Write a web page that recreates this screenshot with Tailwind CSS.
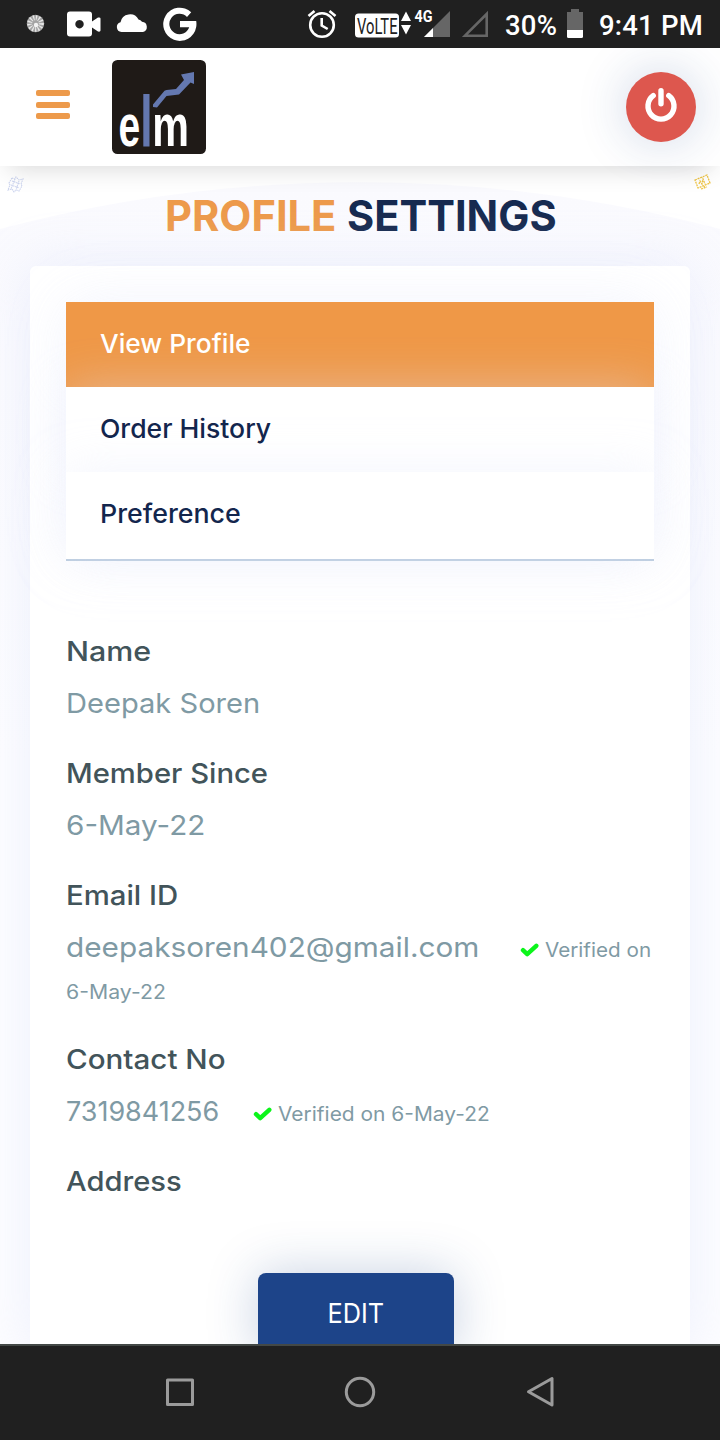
<!DOCTYPE html>
<html lang="en">
<head>
<meta charset="utf-8">
<meta name="viewport" content="width=device-width, initial-scale=1">
<title>Profile Settings</title>
<script src="https://cdn.jsdelivr.net/npm/@tailwindcss/browser@4"></script>
</head>
<body class="w-[720px] h-[1440px] overflow-hidden bg-white font-['Inter',sans-serif]">
<div class="relative flex h-[1440px] w-[720px] flex-col overflow-hidden">

  <!-- Status bar -->
  <div class="relative z-20 flex h-12 shrink-0 items-center bg-[#202020] font-['Roboto',sans-serif] text-white">
    <svg class="h-12 w-[500px] shrink-0" viewBox="0 0 500 48" fill="#fff">
      <circle cx="35.5" cy="23.5" r="8.7" fill="#a3a3a3"/>
      <circle cx="35.5" cy="23.5" r="5.8" fill="none" stroke="#e8e8e8" stroke-width="5" stroke-dasharray="1.2 1.5"/>
      <circle cx="36" cy="25" r="2.2" fill="#f2f2f2"/>
      <path fill-rule="evenodd" d="M70 11.500h19q3 0 3 3v7l6-4q2.500-.500 2.500 1v12q0 1.500-2.500 1l-6-4v6q0 3-3 3H70q-3 0-3-3v-19q0-3 3-3zM79.500 20a4.200 4.200 0 1 0 .01 0z"/>
      <path d="M121.500 32a5 5 0 0 1-1-9.800A9.600 9.600 0 0 1 138.500 19.500a6.200 6.200 0 0 1 3.500 2.300A5.200 5.200 0 0 1 143 32z"/>
      <path d="M180 21h16.200q.500 3 0 6A16.600 16.600 0 1 1 191.200 12.200L187 17A10.200 10.200 0 1 0 189.200 27.300H180z"/>
      <g fill="none" stroke="#fff" stroke-width="2.600">
        <circle cx="322" cy="25" r="11.800"/><path d="M321.700 18v7.500l6 3.500M308.500 16l6-5M335.500 16l-6-5"/>
      </g>
      <rect x="355" y="13.500" width="44" height="24" rx="3.500"/>
      <text x="357" y="34" font-family="Roboto" font-size="22.500" textLength="40.500" lengthAdjust="spacingAndGlyphs" fill="#202020">VoLTE</text>
      <path d="M406 11.500l5 9.500h-10zM406 34.500l5-9.500h-10z"/>
      <text x="414.500" y="21.700" font-family="Roboto" font-weight="700" font-size="17" textLength="18" lengthAdjust="spacingAndGlyphs">4G</text>
      <path d="M450 11v26h-26z" fill="#666"/><path d="M433 28v9h-9z"/>
      <path d="M486.700 14v21.700H465z" fill="none" stroke="#666" stroke-width="2.600"/>
    </svg>
    <span class="ml-[5px] mt-[3px] w-[53px] text-[27.5px] leading-8 font-medium tracking-[0.2px] whitespace-nowrap">30%</span>
    <svg class="ml-[9px] h-12 w-4 shrink-0" viewBox="0 0 16 48"><path d="M4 9h8v3h4v19H0V12h4z" fill="#666"/><path d="M0 30h16v6.500q0 1.500-1.500 1.500h-13Q0 38 0 36.500z" fill="#fff"/></svg>
    <span class="ml-4 mt-[3px] text-[27.5px] leading-8 font-medium tracking-[0.2px] whitespace-nowrap">9:41 PM</span>
  </div>

  <!-- App header -->
  <header class="relative z-10 flex h-[118px] shrink-0 items-center bg-white pl-9 pr-6 shadow-[0_10px_24px_-8px_rgba(0,0,0,0.16)]">
    <button class="mb-[5px] flex w-[34px] flex-col gap-[5.5px]" aria-label="Menu">
      <span class="h-[6px] rounded-[2px] bg-[#ed9a4b]"></span>
      <span class="h-[6px] rounded-[2px] bg-[#ed9a4b]"></span>
      <span class="h-[6px] rounded-[2px] bg-[#ed9a4b]"></span>
    </button>
    <svg class="ml-[42px] h-[94px] w-[94px]" viewBox="0 0 94 94">
      <rect width="94" height="94" rx="5.500" fill="#1f1a17"/>
      <rect x="31.300" y="34" width="6.200" height="52.500" fill="#6478b0"/>
      <path d="M41 44.500 52.500 30.700l2-.700 9.500-1 8-9-3-5.500L82 12v12l-3.500-1.500L67 34.500l-12.500 1.500L45 47.500l-4-.500z" fill="#6478b0"/>
      <g font-family="Liberation Sans" font-weight="700" font-size="59" fill="#fff">
        <text transform="translate(6.600 86) scale(.66 1)">e</text>
        <text transform="translate(40.300 86) scale(.7 1)">m</text>
      </g>
    </svg>
    <button class="ml-auto flex size-[70px] items-center justify-center rounded-full bg-[#dd574e] shadow-[0_0_50px_rgba(30,70,140,0.22)]" aria-label="Log out">
      <svg class="size-[70px]" viewBox="0 0 70 70" fill="none" stroke="#fff" stroke-width="5.400" stroke-linecap="round"><path d="M27.200 23.700a13 13 0 1 0 15.600 0M35 18.700v13"/></svg>
    </button>
  </header>

  <!-- Page body -->
  <main class="relative flex min-h-0 flex-1 flex-col overflow-hidden px-[30px]">
    <svg class="absolute left-0 top-0 h-[1180px] w-[720px]" viewBox="0 0 720 1180">
      <defs><linearGradient id="bg" x1="0" y1="0" x2="0" y2="1"><stop offset="0" stop-color="#fafafe"/><stop offset=".5" stop-color="#fdfdff"/></linearGradient></defs>
      <path d="M0 63A1409 1409 0 0 1 720 63V1180H0z" fill="url(#bg)"/>
      <g fill="none" stroke="#cdd5ef" stroke-width="1.100" stroke-dasharray="1.500 .7"><path d="M12 12l3 1 1-2 3 3 4-1-2 5 1 2-3 5-3-1-2 2-2-3-4 1 2-5-1-2zM12 15l8 3M11 19l8 3M15 13l-4 10M19 15l-3 9"/></g>
      <g fill="none" stroke="#efc544" stroke-width="1.300" stroke-dasharray="2 .8"><path d="M695 14l12-5 3 8-12 5zM704 20l1 2M701 23l6-2M699 18l1-3 2 3 1-5 2 5"/></g>
    </svg>

    <h1 class="relative mt-[26px] flex h-12 items-center pl-[134.500px] text-[42.5px] font-bold leading-[48px] whitespace-nowrap">
      <span class="w-[182px] origin-left scale-x-[0.98] text-[#ed9a4b]">PROFILE</span><span class="origin-left scale-x-[0.978] text-[#162a50]">SETTINGS</span>
    </h1>

    <section class="relative mt-[26px] flex flex-1 flex-col rounded-t-md bg-white px-9 pt-9 shadow-[0_0_55px_rgba(215,222,248,0.42)]">
      <nav class="flex flex-col border-b-2 border-[#bccddf] text-[26px] font-medium text-[#13264d] shadow-[0_0_60px_rgba(215,222,248,0.15)]">
        <a class="flex h-[85px] items-center bg-[#ef9847] pb-[2px] pl-[34px] text-white shadow-[0_0_50px_rgba(222,226,250,0.2)]"><span class="origin-left scale-x-[1.013]">View Profile</span></a>
        <a class="flex h-[85px] items-center bg-white pb-[2px] pl-[34px] shadow-[0_0_50px_rgba(222,226,250,0.42)]"><span class="origin-left scale-x-[1.022]">Order History</span></a>
        <a class="flex h-[87px] items-center bg-white pb-1 pl-[34px] shadow-[0_0_50px_rgba(222,226,250,0.36)]"><span class="origin-left scale-x-[1.03]">Preference</span></a>
      </nav>

      <dl class="mt-16 flex flex-col gap-[18px] text-[27.5px] leading-[52px] whitespace-nowrap text-[#7f9aa4]">
        <div>
          <dt class="h-[52px] font-medium text-[#42545a]"><span class="inline-block origin-left scale-x-[1.105]">Name</span></dt>
          <dd class="h-[52px]"><span class="inline-block origin-left scale-x-[1.058]">Deepak Soren</span></dd>
        </div>
        <div>
          <dt class="h-[52px] font-medium text-[#42545a]"><span class="inline-block origin-left scale-x-[1.063]">Member Since</span></dt>
          <dd class="h-[52px]"><span class="inline-block origin-left scale-x-[1.078]">6-May-22</span></dd>
        </div>
        <div>
          <dt class="h-[52px] font-medium text-[#42545a]"><span class="inline-block origin-left scale-x-[1.067]">Email ID</span></dt>
          <dd class="flex h-[52px] items-center"><span class="w-[454px] origin-left scale-x-[1.082]">deepaksoren402@gmail.com</span>
            <svg class="mt-[5px] h-[14px] w-[19px]" viewBox="0 0 19 14" fill="none" stroke="#0cf51b" stroke-width="4.400" stroke-linejoin="round" stroke-linecap="round"><path d="M3 7.200l4.200 4L16.300 2.800"/></svg>
            <span class="ml-[6px] mt-[6px] origin-left scale-x-[1.06] text-[19.5px]">Verified on</span></dd>
          <dd class="h-10 text-[19.5px] leading-[38px]"><span class="inline-block origin-left scale-x-[1.09]">6-May-22</span></dd>
        </div>
        <div class="mt-[2px]">
          <dt class="h-[52px] font-medium text-[#42545a]"><span class="inline-block origin-left scale-x-[1.075]">Contact No</span></dt>
          <dd class="flex h-[52px] items-center"><span class="w-[187px] origin-left scale-x-[0.98]">7319841256</span>
            <svg class="mt-[5px] h-[14px] w-[19px]" viewBox="0 0 19 14" fill="none" stroke="#0cf51b" stroke-width="4.400" stroke-linejoin="round" stroke-linecap="round"><path d="M3 7.200l4.200 4L16.300 2.800"/></svg>
            <span class="ml-[6px] mt-[6px] origin-left scale-x-[1.073] text-[19.5px]">Verified on 6-May-22</span></dd>
        </div>
        <div>
          <dt class="h-[52px] font-medium text-[#42545a]"><span class="inline-block origin-left scale-x-[1.06]">Address</span></dt>
        </div>
      </dl>

      <button class="ml-48 mt-[66px] flex h-[82px] w-[196px] shrink-0 items-center justify-center rounded-lg bg-[#1d4489] text-[27.5px] text-white shadow-[0_0_50px_rgba(30,70,140,0.25)]"><span class="scale-x-[0.92]">EDIT</span></button>
    </section>
  </main>

  <!-- Android navigation bar -->
  <div class="relative z-20 flex h-24 shrink-0 items-center justify-center border-t-2 border-[#434846] bg-[#202020]">
    <svg class="h-[94px] w-[720px]" viewBox="0 1346 720 94" fill="none" stroke="#9b9b9b" stroke-width="3" stroke-linejoin="round"><rect x="167.500" y="1380" width="25" height="24.500"/><circle cx="360" cy="1392" r="13.700"/><path d="M552 1378.500v26.500l-23.500-13.200z"/></svg>
  </div>
</div>
</body>
</html>
